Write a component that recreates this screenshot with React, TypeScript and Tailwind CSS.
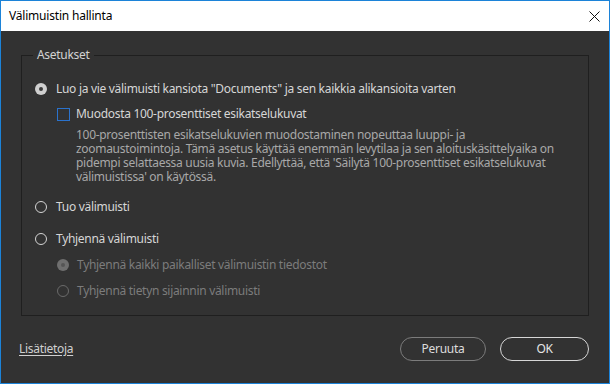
import React from 'react';

const font = { fontFamily: '"Noto Sans", "Open Sans", sans-serif' };

const Radio: React.FC<{ checked?: boolean; disabled?: boolean }> = ({ checked, disabled }) => {
  if (checked) {
    return (
      <span
        className={`flex h-[12px] w-[12px] shrink-0 items-center justify-center rounded-full ${
          disabled ? 'bg-[#6f6f6f]' : 'bg-[#cfcfcf]'
        }`}
      >
        <span className={`h-[4px] w-[4px] rounded-full ${disabled ? 'bg-[#555555]' : 'bg-[#3a3a3a]'}`} />
      </span>
    );
  }
  return (
    <span
      className={`h-[12px] w-[12px] shrink-0 rounded-full border-[1.5px] ${
        disabled ? 'border-[#6a6a6a]' : 'border-[#d4d4d4]'
      }`}
    />
  );
};

const App: React.FC = () => {
  return (
    <div
      className="flex h-[384px] w-[610px] flex-col border border-[#1c83d8] bg-[#323232] text-[12px] tracking-[-0.3px] text-[#d6d6d6]"
      style={font}
    >
      {/* title bar */}
      <div className="flex h-[30px] shrink-0 items-center justify-between bg-white pl-[8px] pr-[9px] text-[12px] tracking-[-0.2px] text-black">
        <span className="leading-none">Välimuistin hallinta</span>
        <svg width="11" height="11" viewBox="0 0 11 11" className="mt-[1px]">
          <path d="M0.5 0.5 L10.5 10.5 M10.5 0.5 L0.5 10.5" stroke="#111" strokeWidth="1" />
        </svg>
      </div>

      <div className="flex flex-1 flex-col px-5 pt-[24px]">
        {/* settings group */}
        <div className="relative border border-[#1f1f1f] pb-[16px] pl-[13px] pt-[25px]">
          <span className="absolute -top-[9px] left-[11px] bg-[#323232] px-[4px] leading-[16px] text-[#d2d2d2]">
            Asetukset
          </span>

          <div className="flex h-[16px] items-center gap-[9px]">
            <Radio checked />
            <span>Luo ja vie välimuisti kansiota "Documents" ja sen kaikkia alikansioita varten</span>
          </div>

          <div className="ml-[22px] mt-[9px] flex h-[16px] items-center gap-[6px]">
            <span className="h-[13px] w-[13px] shrink-0 border border-[#2a72cc]" />
            <span>Muodosta 100-prosenttiset esikatselukuvat</span>
          </div>

          <div className="ml-[41px] mt-[6px] leading-[14px] text-[#a8a8a8]">
            100-prosenttisten esikatselukuvien muodostaminen nopeuttaa luuppi- ja
            <br />
            zoomaustoimintoja. Tämä asetus käyttää enemmän levytilaa ja sen aloituskäsittelyaika on
            <br />
            pidempi selattaessa uusia kuvia. Edellyttää, että 'Säilytä 100-prosenttiset esikatselukuvat
            <br />
            välimuistissa' on käytössä.
          </div>

          <div className="mt-[15px] flex h-[16px] items-center gap-[9px]">
            <Radio />
            <span>Tuo välimuisti</span>
          </div>

          <div className="mt-[16px] flex h-[16px] items-center gap-[9px]">
            <Radio />
            <span>Tyhjennä välimuisti</span>
          </div>

          <div className="ml-[22px] mt-[10px] flex h-[16px] items-center gap-[8px] text-[#7c7c7c]">
            <Radio checked disabled />
            <span>Tyhjennä kaikki paikalliset välimuistin tiedostot</span>
          </div>

          <div className="ml-[22px] mt-[10px] flex h-[16px] items-center gap-[8px] text-[#7c7c7c]">
            <Radio disabled />
            <span>Tyhjennä tietyn sijainnin välimuisti</span>
          </div>
        </div>

        {/* footer */}
        <div className="flex flex-1 items-center justify-between pb-[1px]">
          <a href="#" className="-ml-[2px] text-[#d0d0d0] underline underline-offset-2">
            Lisätietoja
          </a>
          <div className="flex gap-[14px]">
            <button className="h-[24px] w-[86px] rounded-full border border-[#7c7c7c] text-[#dcdcdc]">
              Peruuta
            </button>
            <button className="h-[24px] w-[89px] rounded-full border-[1.5px] border-[#d6d6d6] text-[#e6e6e6]">
              OK
            </button>
          </div>
        </div>
      </div>
    </div>
  );
};

export default App;
